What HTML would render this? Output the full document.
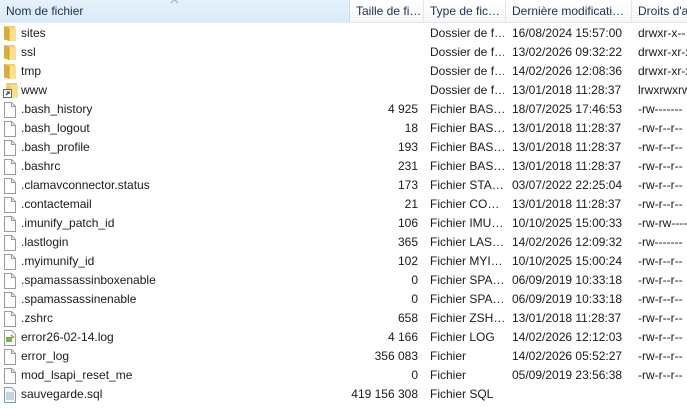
<!DOCTYPE html>
<html><head><meta charset="utf-8"><style>
body{margin:0;width:687px;height:408px;overflow:hidden;background:#fff;font-family:"Liberation Sans",sans-serif;font-size:12px;color:#1a1a1a}
.hdr{position:absolute;top:0;left:0;width:687px;height:22px;background:linear-gradient(#fff,#f6f7f9);border-bottom:1px solid #e3e8ee}
.h{position:absolute;top:0;height:22px;line-height:23px;padding-left:6px;box-sizing:border-box;border-right:1px solid #e3e6ea;white-space:nowrap;overflow:hidden;color:#1e3050}
.h0{left:0;width:350px;background:linear-gradient(#e5f1fb,#d9eafa);border-right:1px solid #c6dcf0}
.row{position:absolute;left:0;width:687px;height:19px;line-height:19px;white-space:nowrap}
.c{position:absolute;top:0;overflow:hidden}
.n{left:21px;width:329px}
.s{left:350px;width:68px;text-align:right}
.t{left:430px;width:74px}
.d{left:512px;width:120px}
.r{left:638px;width:60px}
.ic{position:absolute;left:3px;top:2px}
</style></head><body>
<div class="hdr">
<div class="h h0">Nom de fichier</div>
<svg style="position:absolute;left:170px;top:-1px" width="9" height="5"><path d="M1 4L4.5 0.5L8 4" fill="none" stroke="#9aaabb"/></svg>
<div class="h" style="left:350px;width:74px">Taille de fi…</div>
<div class="h" style="left:424px;width:82px">Type de fic…</div>
<div class="h" style="left:506px;width:126px">Dernière modificati…</div>
<div class="h" style="left:632px;width:60px;border:none">Droits d'a</div>
</div>
<div id="rows"></div>
<script>
var F='<svg class="ic" style="top:1px" width="16" height="16"><path d="M1 1h11v14H1z" fill="#f0cf6a"/><path d="M1 1l5 2v13l-5-2z" fill="#d9ad3c"/><path d="M6 3h7v13H6z" fill="#f9e08f"/><path d="M6 3v13" stroke="#c99a2e" stroke-width="0.8"/></svg>';
var L='<svg class="ic" style="top:1px" width="16" height="16"><path d="M3 1h11v14H3z" fill="#f0cf6a"/><path d="M8 3h7v13H8z" fill="#f9e08f"/><rect x="0.5" y="7.5" width="8" height="8" fill="#fff" stroke="#666"/><path d="M3 13l3-3M4 10h2v2" stroke="#2a5fb0" stroke-width="1.5" fill="none"/></svg>';
var D='<svg class="ic" width="14" height="16"><path d="M1.5 0.5h7l4 4v11h-11z" fill="#fff" stroke="#9a9a9a"/><path d="M8.5 0.5v4h4" fill="none" stroke="#9a9a9a"/></svg>';
var G='<svg class="ic" width="14" height="16"><path d="M1.5 0.5h7l4 4v11h-11z" fill="#fff" stroke="#9a9a9a"/><rect x="3" y="7" width="6" height="5" fill="#6cbb3c"/><path d="M8 5l3 3" stroke="#c8a030" stroke-width="2"/></svg>';
var S='<svg class="ic" width="14" height="16"><path d="M1.5 0.5h7l4 4v11h-11z" fill="#f4f8fc" stroke="#8a9aaa"/><path d="M3 6h8M3 8h8M3 10h8M3 12h8" stroke="#9ab0c8"/></svg>';
var d=[[F,'sites','','Dossier de f…','16/08/2024 15:57:00','drwxr-x--'],
[F,'ssl','','Dossier de f…','13/02/2026 09:32:22','drwxr-xr-x'],
[F,'tmp','','Dossier de f…','14/02/2026 12:08:36','drwxr-xr-x'],
[L,'www','','Dossier de f…','13/01/2018 11:28:37','lrwxrwxrwx'],
[D,'.bash_history','4 925','Fichier BAS…','18/07/2025 17:46:53','-rw-------'],
[D,'.bash_logout','18','Fichier BAS…','13/01/2018 11:28:37','-rw-r--r--'],
[D,'.bash_profile','193','Fichier BAS…','13/01/2018 11:28:37','-rw-r--r--'],
[D,'.bashrc','231','Fichier BAS…','13/01/2018 11:28:37','-rw-r--r--'],
[D,'.clamavconnector.status','173','Fichier STA…','03/07/2022 22:25:04','-rw-r--r--'],
[D,'.contactemail','21','Fichier CO…','13/01/2018 11:28:37','-rw-r--r--'],
[D,'.imunify_patch_id','106','Fichier IMU…','10/10/2025 15:00:33','-rw-rw----'],
[D,'.lastlogin','365','Fichier LAS…','14/02/2026 12:09:32','-rw-------'],
[D,'.myimunify_id','102','Fichier MYI…','10/10/2025 15:00:24','-rw-r--r--'],
[D,'.spamassassinboxenable','0','Fichier SPA…','06/09/2019 10:33:18','-rw-r--r--'],
[D,'.spamassassinenable','0','Fichier SPA…','06/09/2019 10:33:18','-rw-r--r--'],
[D,'.zshrc','658','Fichier ZSH…','13/01/2018 11:28:37','-rw-r--r--'],
[G,'error26-02-14.log','4 166','Fichier LOG','14/02/2026 12:12:03','-rw-r--r--'],
[D,'error_log','356 083','Fichier','14/02/2026 05:52:27','-rw-r--r--'],
[D,'mod_lsapi_reset_me','0','Fichier','05/09/2019 23:56:38','-rw-r--r--'],
[S,'sauvegarde.sql','419 156 308','Fichier SQL','','']];
var h='';d.forEach(function(r,i){h+='<div class="row" style="top:'+(24+i*19)+'px">'+r[0]+'<div class="c n">'+r[1]+'</div><div class="c s">'+r[2]+'</div><div class="c t">'+r[3]+'</div><div class="c d">'+r[4]+'</div><div class="c r">'+r[5]+'</div></div>';});
document.getElementById('rows').innerHTML=h;
</script>
</body></html>
